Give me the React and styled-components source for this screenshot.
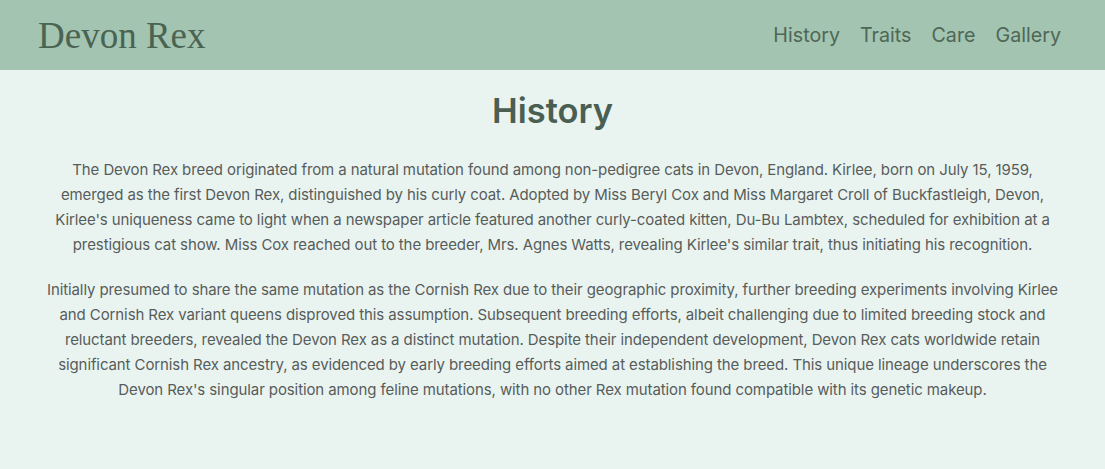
import React from "react";
import styled, { createGlobalStyle } from "styled-components";

const GlobalStyle = createGlobalStyle`
  body {
    margin: 0;
    background: #e9f4f1;
    font-family: Inter, "Noto Sans", sans-serif;
  }
`;

const Header = styled.header`
  display: flex;
  justify-content: space-between;
  align-items: center;
  height: 70px;
  padding: 0 44px 0 38px;
  background: #a2c4b0;
`;

const Logo = styled.div`
  font-family: "Liberation Serif", serif;
  font-size: 37px;
  color: #4a6352;
`;

const Nav = styled.nav`
  display: flex;
  gap: 20px;
`;

const NavLink = styled.a`
  font-size: 19.7px;
  color: #4f6757;
  text-decoration: none;
`;

const Main = styled.main`
  padding: 20px 40px;
  text-align: center;
`;

const Title = styled.h1`
  margin: 0 0 26px;
  font-size: 34.5px;
  font-weight: 600;
  color: #4a5f52;
`;

const Text = styled.p`
  margin: 0 0 20px;
  font-size: 15px;
  line-height: 25px;
  letter-spacing: -0.1px;
  color: #585c5a;
`;

export default function App() {
  return (
    <>
      <GlobalStyle />
      <Header>
        <Logo>Devon Rex</Logo>
        <Nav>
          <NavLink href="#history">History</NavLink>
          <NavLink href="#traits">Traits</NavLink>
          <NavLink href="#care">Care</NavLink>
          <NavLink href="#gallery">Gallery</NavLink>
        </Nav>
      </Header>
      <Main>
        <Title>History</Title>
        <Text>
          The Devon Rex breed originated from a natural mutation found among
          non-pedigree cats in Devon, England. Kirlee, born on July 15, 1959,
          emerged as the first Devon Rex, distinguished by his curly coat.
          Adopted by Miss Beryl Cox and Miss Margaret Croll of Buckfastleigh,
          Devon, Kirlee's uniqueness came to light when a newspaper article
          featured another curly-coated kitten, Du-Bu Lambtex, scheduled for
          exhibition at a prestigious cat show. Miss Cox reached out to the
          breeder, Mrs. Agnes Watts, revealing Kirlee's similar trait, thus
          initiating his recognition.
        </Text>
        <Text>
          Initially presumed to share the same mutation as the Cornish Rex due
          to their geographic proximity, further breeding experiments involving
          Kirlee and Cornish Rex variant queens disproved this assumption.
          Subsequent breeding efforts, albeit challenging due to limited
          breeding stock and reluctant breeders, revealed the Devon Rex as a
          distinct mutation. Despite their independent development, Devon Rex
          cats worldwide retain significant Cornish Rex ancestry, as evidenced
          by early breeding efforts aimed at establishing the breed. This unique
          lineage underscores the Devon Rex's singular position among feline
          mutations, with no other Rex mutation found compatible with its
          genetic makeup.
        </Text>
      </Main>
    </>
  );
}
